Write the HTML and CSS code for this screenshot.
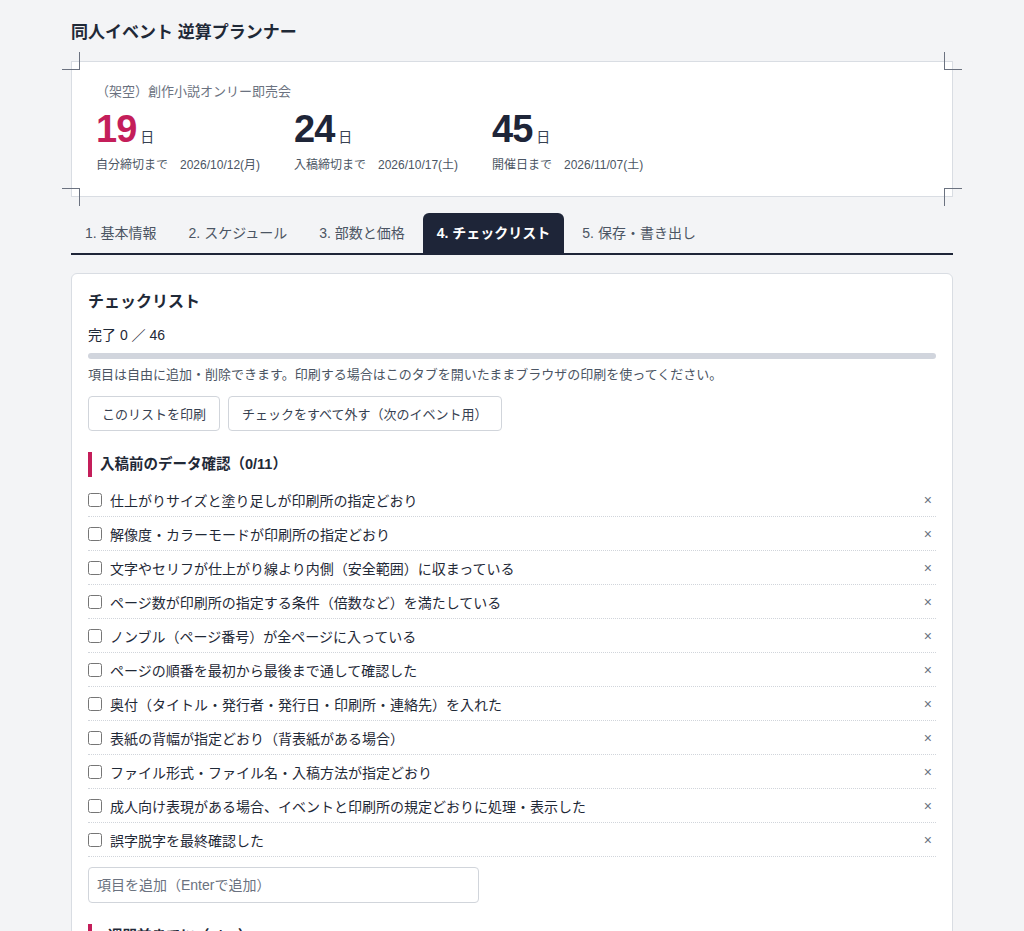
FILE: index.html
```html
<!DOCTYPE html>
<html lang="ja">

<head>
    <meta charset="UTF-8">
    <meta name="viewport" content="width=device-width, initial-scale=1.0">
    <title>同人イベント 逆算プランナー</title>
    <link rel="stylesheet" href="styles.css">
</head>

<body>
    <div class="app">
        <h1 class="app-title">同人イベント 逆算プランナー</h1>

        <!-- 残り日数のサマリー -->
        <div class="summary">
            <span class="tombo tombo-tl"></span>
            <span class="tombo tombo-tr"></span>
            <span class="tombo tombo-bl"></span>
            <span class="tombo tombo-br"></span>

            <div class="event-name">（架空）創作小説オンリー即売会</div>
            <div class="countdowns">
                <div class="countdown">
                    <div class="count"><span class="num num-accent">19</span><span class="unit">日</span></div>
                    <div class="count-label">自分締切まで<span class="date">2026/10/12(月)</span></div>
                </div>
                <div class="countdown">
                    <div class="count"><span class="num">24</span><span class="unit">日</span></div>
                    <div class="count-label">入稿締切まで<span class="date">2026/10/17(土)</span></div>
                </div>
                <div class="countdown">
                    <div class="count"><span class="num">45</span><span class="unit">日</span></div>
                    <div class="count-label">開催日まで<span class="date">2026/11/07(土)</span></div>
                </div>
            </div>
        </div>

        <nav class="tabs">
            <button class="tab">1. 基本情報</button>
            <button class="tab">2. スケジュール</button>
            <button class="tab">3. 部数と価格</button>
            <button class="tab active">4. チェックリスト</button>
            <button class="tab">5. 保存・書き出し</button>
        </nav>

        <section class="panel">
            <h2>チェックリスト</h2>
            <div class="progress-text">完了 0 ／ 46</div>
            <div class="progress"><div class="progress-fill" style="width: 0%"></div></div>
            <p class="note">項目は自由に追加・削除できます。印刷する場合はこのタブを開いたままブラウザの印刷を使ってください。</p>
            <div class="actions">
                <button class="btn">このリストを印刷</button>
                <button class="btn">チェックをすべて外す（次のイベント用）</button>
            </div>

            <div class="group">
                <h3 class="group-title">入稿前のデータ確認（0/11）</h3>
                <ul class="items">
                    <li class="item"><label><input type="checkbox">仕上がりサイズと塗り足しが印刷所の指定どおり</label><button class="remove">×</button></li>
                    <li class="item"><label><input type="checkbox">解像度・カラーモードが印刷所の指定どおり</label><button class="remove">×</button></li>
                    <li class="item"><label><input type="checkbox">文字やセリフが仕上がり線より内側（安全範囲）に収まっている</label><button class="remove">×</button></li>
                    <li class="item"><label><input type="checkbox">ページ数が印刷所の指定する条件（倍数など）を満たしている</label><button class="remove">×</button></li>
                    <li class="item"><label><input type="checkbox">ノンブル（ページ番号）が全ページに入っている</label><button class="remove">×</button></li>
                    <li class="item"><label><input type="checkbox">ページの順番を最初から最後まで通して確認した</label><button class="remove">×</button></li>
                    <li class="item"><label><input type="checkbox">奥付（タイトル・発行者・発行日・印刷所・連絡先）を入れた</label><button class="remove">×</button></li>
                    <li class="item"><label><input type="checkbox">表紙の背幅が指定どおり（背表紙がある場合）</label><button class="remove">×</button></li>
                    <li class="item"><label><input type="checkbox">ファイル形式・ファイル名・入稿方法が指定どおり</label><button class="remove">×</button></li>
                    <li class="item"><label><input type="checkbox">成人向け表現がある場合、イベントと印刷所の規定どおりに処理・表示した</label><button class="remove">×</button></li>
                    <li class="item"><label><input type="checkbox">誤字脱字を最終確認した</label><button class="remove">×</button></li>
                </ul>
                <input class="add-item" type="text" placeholder="項目を追加（Enterで追加）">
            </div>

            <div class="group">
                <h3 class="group-title">1週間前までに（0/10）</h3>
                <ul class="items">
                    <li class="item"><label><input type="checkbox">お品書きを作成して告知した</label><button class="remove">×</button></li>
                    <li class="item"><label><input type="checkbox">値札・ポップを用意した</label><button class="remove">×</button></li>
                </ul>
            </div>
        </section>
    </div>
</body>

</html>
```

FILE: styles.css
```css
/* ページ全体 */
* {
    box-sizing: border-box;
    margin: 0;
    padding: 0;
}

body {
    background-color: #f3f4f6;
    color: #1f2937;
    font-family: "Liberation Sans", "Noto Sans CJK JP", sans-serif;
}

.app {
    max-width: 882px;
    margin: 0 auto;
    padding-top: 20px;
}

.app-title {
    font-size: 17px;
    font-weight: 700;
    line-height: 26px;
    color: #1f2937;
    margin-bottom: 15px;
}

/* サマリー（トンボ付き） */
.summary {
    position: relative;
    background-color: #fff;
    border: 1px solid #d9dde3;
    padding: 21px 24px 23px;
}

.tombo {
    position: absolute;
    width: 18px;
    height: 18px;
    border-color: #6b7280;
    border-style: solid;
    border-width: 0;
}

.tombo-tl {
    left: -10px;
    top: -10px;
    border-right-width: 1px;
    border-bottom-width: 1px;
}

.tombo-tr {
    right: -10px;
    top: -10px;
    border-left-width: 1px;
    border-bottom-width: 1px;
}

.tombo-bl {
    left: -10px;
    bottom: -10px;
    border-right-width: 1px;
    border-top-width: 1px;
}

.tombo-br {
    right: -10px;
    bottom: -10px;
    border-left-width: 1px;
    border-top-width: 1px;
}

.event-name {
    font-size: 13px;
    line-height: 18px;
    color: #6b7280;
}

.countdowns {
    display: flex;
    margin-top: 8px;
}

.countdown {
    width: 198px;
}

.count {
    display: flex;
    align-items: baseline;
    line-height: 40px;
}

.num {
    font-size: 38px;
    font-weight: 700;
    color: #1e2538;
    letter-spacing: -1px;
}

.num-accent {
    color: #c41e5a;
}

.unit {
    font-size: 14px;
    color: #374151;
    margin-left: 4px;
}

.count-label {
    font-size: 12px;
    line-height: 16px;
    color: #4b5563;
}

.date {
    margin-left: 12px;
}

/* タブ */
.tabs {
    display: flex;
    gap: 4px;
    margin-top: 16px;
    border-bottom: 2px solid #1e2538;
}

.tab {
    font-family: inherit;
    font-size: 14px;
    line-height: 40px;
    padding: 0 14px;
    background: none;
    border: none;
    color: #4b5563;
    border-radius: 6px 6px 0 0;
    cursor: pointer;
}

.tab.active {
    background-color: #1e2538;
    color: #fff;
    font-weight: 700;
}

/* チェックリスト */
.panel {
    margin-top: 18px;
    background-color: #fff;
    border: 1px solid #d9dde3;
    border-radius: 6px;
    padding: 16px 16px 20px;
}

.panel h2 {
    font-size: 16px;
    font-weight: 700;
    line-height: 24px;
    color: #1f2937;
}

.progress-text {
    font-size: 14px;
    line-height: 20px;
    margin-top: 11px;
    color: #1f2937;
}

.progress {
    height: 6px;
    border-radius: 3px;
    background-color: #d1d5dd;
    margin-top: 8px;
    overflow: hidden;
}

.progress-fill {
    height: 100%;
    background-color: #c41e5a;
}

.note {
    font-size: 13px;
    line-height: 18px;
    color: #4b5563;
    margin-top: 7px;
}

.actions {
    display: flex;
    gap: 8px;
    margin-top: 12px;
}

.btn {
    font-family: inherit;
    font-size: 13px;
    height: 35px;
    padding: 0 13px;
    background-color: #fff;
    border: 1px solid #d1d5db;
    border-radius: 4px;
    color: #374151;
    cursor: pointer;
}

.group {
    margin-top: 21px;
}

.group-title {
    font-size: 14.5px;
    font-weight: 700;
    line-height: 25px;
    border-left: 4px solid #c41e5a;
    padding-left: 8px;
    color: #1f2937;
    margin-bottom: 6px;
}

.items {
    list-style: none;
}

.item {
    display: flex;
    align-items: center;
    justify-content: space-between;
    height: 34px;
    border-bottom: 1px dotted #d1d5db;
}

.item label {
    display: flex;
    align-items: center;
    font-size: 14px;
    color: #1f2937;
}

.item input {
    width: 14px;
    height: 14px;
    margin: 0 8px 0 0;
}

.remove {
    font-family: inherit;
    font-size: 14px;
    background: none;
    border: none;
    color: #6b7280;
    padding: 0 4px;
    cursor: pointer;
}

.add-item {
    display: block;
    width: 391px;
    height: 36px;
    margin-top: 10px;
    padding: 0 8px;
    font-family: inherit;
    font-size: 14px;
    border: 1px solid #d1d5db;
    border-radius: 4px;
}

.add-item::placeholder {
    color: #6b7280;
}
```
